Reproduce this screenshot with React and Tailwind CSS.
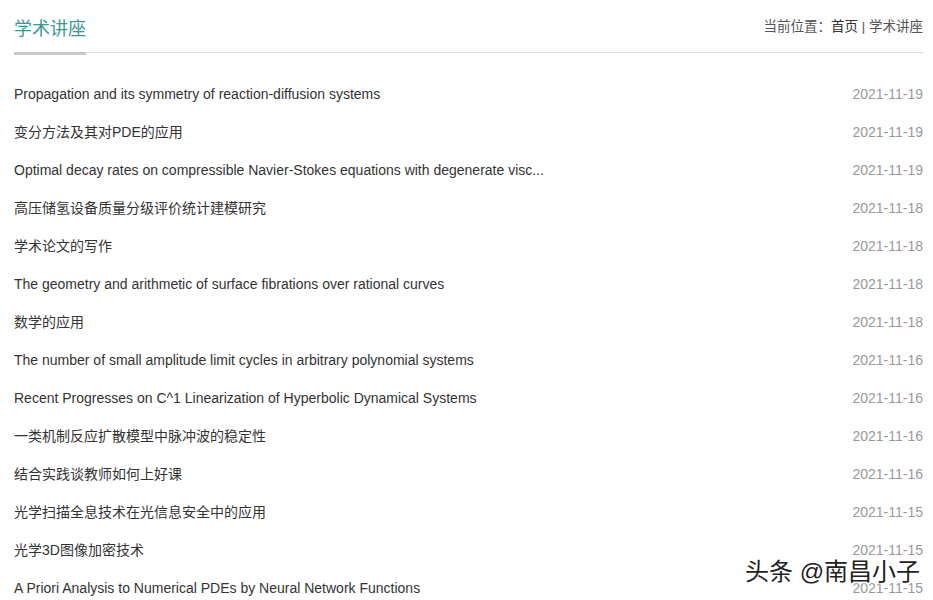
import React from 'react';

const lectures = [
  { title: 'Propagation and its symmetry of reaction-diffusion systems', date: '2021-11-19' },
  { title: '变分方法及其对PDE的应用', date: '2021-11-19' },
  { title: 'Optimal decay rates on compressible Navier-Stokes equations with degenerate visc...', date: '2021-11-19' },
  { title: '高压储氢设备质量分级评价统计建模研究', date: '2021-11-18' },
  { title: '学术论文的写作', date: '2021-11-18' },
  { title: 'The geometry and arithmetic of surface fibrations over rational curves', date: '2021-11-18' },
  { title: '数学的应用', date: '2021-11-18' },
  { title: 'The number of small amplitude limit cycles in arbitrary polynomial systems', date: '2021-11-16' },
  { title: 'Recent Progresses on C^1 Linearization of Hyperbolic Dynamical Systems', date: '2021-11-16' },
  { title: '一类机制反应扩散模型中脉冲波的稳定性', date: '2021-11-16' },
  { title: '结合实践谈教师如何上好课', date: '2021-11-16' },
  { title: '光学扫描全息技术在光信息安全中的应用', date: '2021-11-15' },
  { title: '光学3D图像加密技术', date: '2021-11-15' },
  { title: 'A Priori Analysis to Numerical PDEs by Neural Network Functions', date: '2021-11-15' },
];

const App = () => {
  return (
    <div className="relative h-[600px] overflow-hidden bg-white pl-[14px] pr-[10px] font-['Liberation_Sans','Noto_Sans_CJK_SC',sans-serif]">
      {/* 标题栏 */}
      <div className="flex justify-between border-b border-[#dddddd]">
        <h2 className="pt-[17px] pb-[11px] -mb-[3px] border-b-[3px] border-[#c8c8c8] text-[18px] leading-[24px] text-[#3d9896]">
          学术讲座
        </h2>
        <div className="pt-[18px] text-[13.5px] leading-[18px] text-[#555]">
          当前位置：<span className="text-[#333]">首页</span> | 学术讲座
        </div>
      </div>

      {/* 列表 */}
      <ul className="mt-[22px]">
        {lectures.map((item, i) => (
          <li key={i} className="flex h-[38px] items-center justify-between text-[14px]">
            <span className="text-[#333]">{item.title}</span>
            <span className="text-[#999]">{item.date}</span>
          </li>
        ))}
      </ul>

      {/* 水印 */}
      <div className="absolute left-[745px] top-[557px] text-[24px] leading-[30px] text-[#222] [text-shadow:0_0_2px_#fff,0_0_2px_#fff,1px_1px_2px_#fff]">
        头条 @南昌小子
      </div>
    </div>
  );
};

export default App;
